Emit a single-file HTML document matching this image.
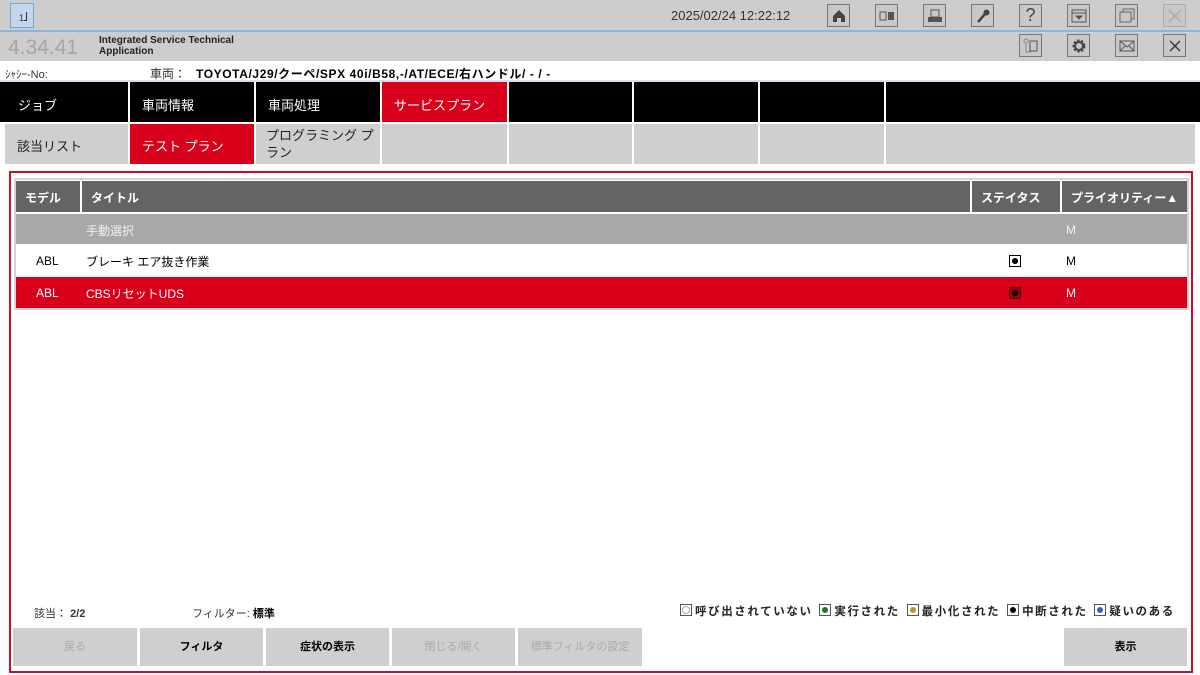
<!DOCTYPE html>
<html><head><meta charset="utf-8"><style>
*{margin:0;padding:0;box-sizing:border-box}
body{width:1200px;height:675px;background:#fff;position:relative;overflow:hidden;font-family:"Liberation Sans","Noto Sans CJK JP",sans-serif;color:#000}
.a{position:absolute}
.ib{position:absolute;width:23px;height:23px;border:1px solid #777;background:#c8c8c8;display:flex;align-items:center;justify-content:center}
.nav{position:absolute;top:82px;height:40px;background:#000;color:#fff;font-size:13px;padding:13px 0 0 12px}
.sub{position:absolute;top:124px;height:40px;background:#cfcfcf;font-size:13px;padding:12px 0 0 12px;color:#222}
.th{position:absolute;top:181px;height:31px;background:#646464;color:#fff;font-size:12px;font-weight:bold;padding:8px 0 0 9px}
.btn{position:absolute;top:628px;height:38px;background:#cfcfcf;font-size:11px;font-weight:bold;text-align:center;line-height:38px}
.dis{color:#a9a9a9;font-weight:normal}
.chk{position:absolute;width:12px;height:12px;border:1px solid #000;background:#fff}
.chk:after{content:"";position:absolute;left:2px;top:2px;width:6px;height:6px;border-radius:50%;background:#000}
.lg{display:inline-block;width:12px;height:12px;border:1px solid #555;background:#fff;position:relative;vertical-align:-1px;margin-right:3px}
.lg i{position:absolute;left:2px;top:2px;width:6px;height:6px;border-radius:50%}
</style></head><body>
<div class="a" style="left:0;top:0;width:1200px;height:30px;background:#cdcdcd"></div>
<div class="a" style="left:0;top:30px;width:1200px;height:2px;background:#8fb4d9"></div>
<div class="a" style="left:0;top:32px;width:1200px;height:29px;background:#cdcdcd"></div>
<div class="a" style="left:10px;top:3px;width:24px;height:25px;border:1px solid #7aa6d6;background:#c3d6ea;font-size:9px;color:#333;padding:8px 0 0 8px">1<span style="border-right:1px solid #333;border-bottom:1px solid #333;display:inline-block;width:3px;height:9px"></span></div>
<div class="a" style="left:671px;top:8px;font-size:13px;color:#333">2025/02/24 12:22:12</div>
<div class="ib" style="left:827px;top:4px"><svg width="16" height="16"><path d="M8 2L2 8V14H6V10H10V14H14V8Z" fill="#444"/></svg></div>
<div class="ib" style="left:875px;top:4px"><svg width="16" height="12"><rect x="1" y="2" width="6" height="8" fill="none" stroke="#555"/><rect x="9" y="2" width="6" height="8" fill="#555"/></svg></div>
<div class="ib" style="left:923px;top:4px"><svg width="16" height="16"><rect x="4" y="2" width="8" height="7" fill="none" stroke="#555"/><rect x="1" y="9" width="14" height="5" fill="#555"/></svg></div>
<div class="ib" style="left:971px;top:4px"><svg width="16" height="16"><path d="M3 14L10 6" stroke="#444" stroke-width="2.5"/><circle cx="11.5" cy="4.5" r="3" fill="#444"/></svg></div>
<div class="ib" style="left:1019px;top:4px;font-size:18px;color:#444">?</div>
<div class="ib" style="left:1067px;top:4px"><svg width="16" height="16"><rect x="1" y="2" width="14" height="12" fill="none" stroke="#555"/><path d="M1 5H15M5 8H11L8 11Z" stroke="#555" fill="#555"/></svg></div>
<div class="ib" style="left:1115px;top:4px"><svg width="16" height="16"><rect x="1" y="4" width="11" height="10" fill="none" stroke="#666"/><path d="M4 4V1H15V11H12" fill="none" stroke="#666"/></svg></div>
<div class="ib" style="left:1163px;top:4px;border-color:#aaa"><svg width="16" height="16"><path d="M2 2L14 14M14 2L2 14" stroke="#aaa" stroke-width="1.3"/></svg></div>
<div class="a" style="left:8px;top:36px;font-size:21px;color:#a5a5a5">4.34.41</div>
<div class="a" style="left:99px;top:35px;font-size:10px;font-weight:bold;line-height:11px;color:#222">Integrated Service Technical<br>Application</div>
<div class="ib" style="left:1019px;top:34px"><svg width="16" height="16"><rect x="7" y="3" width="7" height="10" fill="none" stroke="#555"/><path d="M3 6V14H8" fill="none" stroke="#888"/><circle cx="3" cy="3" r="2" fill="none" stroke="#888"/></svg></div>
<div class="ib" style="left:1067px;top:34px"><svg width="16" height="16"><circle cx="8" cy="8" r="5" fill="none" stroke="#444" stroke-width="3" stroke-dasharray="2.2 1.4"/><circle cx="8" cy="8" r="4" fill="none" stroke="#444" stroke-width="2"/></svg></div>
<div class="ib" style="left:1115px;top:34px"><svg width="16" height="14"><rect x="1" y="2" width="14" height="10" fill="none" stroke="#555"/><path d="M1 2L8 8L15 2M1 12L6 7M15 12L10 7" fill="none" stroke="#555"/></svg></div>
<div class="ib" style="left:1163px;top:34px"><svg width="16" height="16"><path d="M3 3L13 13M13 3L3 13" stroke="#333" stroke-width="1.4"/></svg></div>
<div class="a" style="left:5px;top:66px;font-size:11px;color:#333">ｼｬｼｰ-No:</div>
<div class="a" style="left:150px;top:65px;font-size:12px;color:#333">車両：</div>
<div class="a" style="left:196px;top:65px;font-size:12px;font-weight:bold;letter-spacing:0.6px;white-space:nowrap">TOYOTA/J29/クーペ/SPX 40i/B58,-/AT/ECE/右ハンドル/ - / -</div>
<div class="a" style="left:0;top:80px;width:1200px;height:2px;background:#dde"></div>
<div class="nav" style="left:0;width:128px;padding-left:18px">ジョブ</div>
<div class="nav" style="left:130px;width:124px">車両情報</div>
<div class="nav" style="left:256px;width:124px">車両処理</div>
<div class="nav" style="left:382px;width:125px;background:#d9001b">サービスプラン</div>
<div class="nav" style="left:509px;width:123px"></div>
<div class="nav" style="left:634px;width:124px"></div>
<div class="nav" style="left:760px;width:124px"></div>
<div class="nav" style="left:886px;width:314px"></div>
<div class="sub" style="left:5px;width:123px">該当リスト</div>
<div class="sub" style="left:130px;width:124px;background:#d9001b;color:#fff">テスト プラン</div>
<div class="sub" style="left:256px;width:124px;padding:3px 0 0 10px;line-height:17px">プログラミング プ<br>ラン</div>
<div class="sub" style="left:382px;width:125px"></div>
<div class="sub" style="left:509px;width:123px"></div>
<div class="sub" style="left:634px;width:124px"></div>
<div class="sub" style="left:760px;width:124px"></div>
<div class="sub" style="left:886px;width:309px"></div>
<div class="a" style="left:9px;top:171px;width:1184px;height:502px;border:2px solid #c8102e"></div>
<div class="a" style="left:14px;top:178px;width:1175px;height:132px;border:2px solid #d4d4d4;background:#fff"></div>
<div class="th" style="left:16px;width:64px">モデル</div>
<div class="th" style="left:82px;width:888px">タイトル</div>
<div class="th" style="left:972px;width:88px">ステイタス</div>
<div class="th" style="left:1062px;width:125px">プライオリティー▲</div>
<div class="a" style="left:16px;top:214px;width:1171px;height:30px;background:#a8a8a8;color:#f0f0f0;font-size:12px"><span class="a" style="left:70px;top:8px">手動選択</span><span class="a" style="left:1050px;top:9px">M</span></div>
<div class="a" style="left:16px;top:245px;width:1171px;height:31px;background:#fff;font-size:12px"><span class="a" style="left:20px;top:9px">ABL</span><span class="a" style="left:70px;top:8px">ブレーキ エア抜き作業</span><span class="a" style="left:1050px;top:9px">M</span></div>
<div class="chk" style="left:1009px;top:255px"></div>
<div class="a" style="left:16px;top:277px;width:1171px;height:31px;background:#d9001b;color:#fff;font-size:12px"><span class="a" style="left:20px;top:9px">ABL</span><span class="a" style="left:70px;top:8px">CBSリセットUDS</span><span class="a" style="left:1050px;top:9px">M</span></div>
<div class="chk" style="left:1009px;top:287px;background:#9a0010;border-color:#600"></div>
<div class="a" style="left:34px;top:605px;font-size:11px;color:#333">該当： <b>2/2</b></div>
<div class="a" style="left:192px;top:605px;font-size:11px;color:#333">フィルター: <b style="color:#000">標準</b></div>
<div class="a" style="left:680px;top:603px;font-size:11.5px;font-weight:bold;color:#222;white-space:nowrap;letter-spacing:1.6px">
<span class="lg"><i style="background:#fff;border:1px solid #aaa;left:1px;top:1px;width:8px;height:8px"></i></span>呼び出されていない
<span class="lg" style="margin-left:2px"><i style="background:#1a7a1a"></i></span>実行された
<span class="lg" style="margin-left:2px"><i style="background:#b8962a"></i></span>最小化された
<span class="lg" style="margin-left:2px"><i style="background:#000"></i></span>中断された
<span class="lg" style="margin-left:2px"><i style="background:#3560c0"></i></span>疑いのある</div>
<div class="btn dis" style="left:13px;width:124px">戻る</div>
<div class="btn" style="left:140px;width:123px">フィルタ</div>
<div class="btn" style="left:266px;width:123px">症状の表示</div>
<div class="btn dis" style="left:392px;width:123px">閉じる/開く</div>
<div class="btn dis" style="left:518px;width:124px">標準フィルタの設定</div>
<div class="btn" style="left:1064px;width:123px">表示</div>
</body></html>
